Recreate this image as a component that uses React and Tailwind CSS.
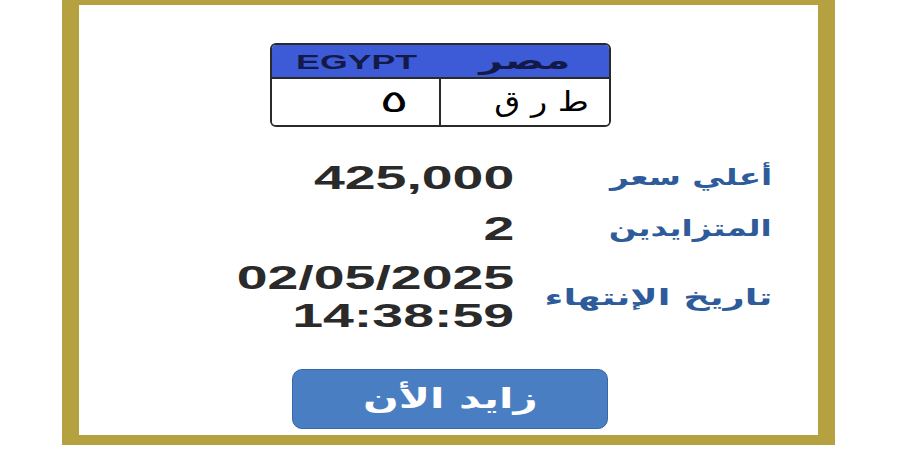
import React from 'react';

const num = "font-['Liberation_Sans',Arial,sans-serif] font-bold text-[#2a2a2a]";
const ar = "font-['DejaVu_Sans','Liberation_Sans',sans-serif]";

const Plate = () => (
    <div className="ml-[191px] mt-[38px] w-[341px] h-[84px] border-2 border-[#2a2a2a] rounded-[6px] overflow-hidden flex flex-col">
        <div className="h-[34px] bg-[#3d5bd6] border-b-2 border-[#2a2a2a] flex">
            <div className="w-1/2 flex items-center justify-center">
                <span className={`inline-block scale-x-[1.7] text-[21px] leading-none ${num} text-[#131a47]`}>EGYPT</span>
            </div>
            <div className="w-1/2 flex items-center justify-center">
                <span dir="rtl" className={`inline-block scale-x-[1.7] text-[24px] leading-none font-bold text-[#131a47] ${ar}`}>مصر</span>
            </div>
        </div>
        <div className="flex-1 flex bg-white">
            <div className="w-1/2 flex items-center justify-end pr-[36px] border-r-2 border-[#2a2a2a]">
                <span className={`inline-block scale-x-[1.8] text-[30px] leading-none text-black ${ar}`}>٥</span>
            </div>
            <div className="w-1/2 flex items-center justify-end pr-[20px]">
                <span dir="rtl" className={`inline-block origin-right scale-x-[1.2] text-[28px] leading-none text-black ${ar}`}>ط ر ق</span>
            </div>
        </div>
    </div>
);

const Row = ({ label, children, h, center, scale = 'scale-x-[1.42]' }) => (
    <div className={`flex ${center ? 'items-center' : 'items-start'}`} style={{ height: h }}>
        <div className="w-[244px] flex flex-col items-end">{children}</div>
        <div className="w-[258px] flex justify-end">
            <span dir="rtl" className={`inline-block origin-right ${scale} text-[23px] leading-[33px] font-bold text-[#2e5b9a] ${ar}`}>{label}</span>
        </div>
    </div>
);

const Value = ({ children, lh = 'leading-[33px]' }) => (
    <span className={`inline-block origin-right scale-x-[1.68] text-[33px] ${lh} ${num}`}>{children}</span>
);

export default function App() {
    return (
        <div className="w-[900px] h-[450px] bg-white overflow-hidden">
            <div className="ml-[62px] w-[773px] h-[445px] border-x-[17px] border-t-[5px] border-b-[10px] border-[#b6a140] bg-white flex flex-col">
                <Plate />
                <div className="ml-[191px] mt-[34px] flex flex-col">
                    <Row label="أعلي سعر" h={51}>
                        <Value>425,000</Value>
                    </Row>
                    <Row label="المتزايدين" h={47}>
                        <Value>2</Value>
                    </Row>
                    <Row label="تاريخ الإنتهاء" h={76} center scale="scale-x-[1.6]">
                        <Value lh="leading-[38px]">02/05/2025</Value>
                        <Value lh="leading-[38px]">14:38:59</Value>
                    </Row>
                </div>
                <button className="ml-[213px] mt-[34px] w-[316px] h-[60px] rounded-[10px] bg-[#4a7ec3] border border-[#3a68a6] flex items-center justify-center">
                    <span dir="rtl" className={`inline-block scale-x-[1.5] text-[28px] leading-none font-bold text-white ${ar}`}>زايد الأن</span>
                </button>
            </div>
        </div>
    );
}
